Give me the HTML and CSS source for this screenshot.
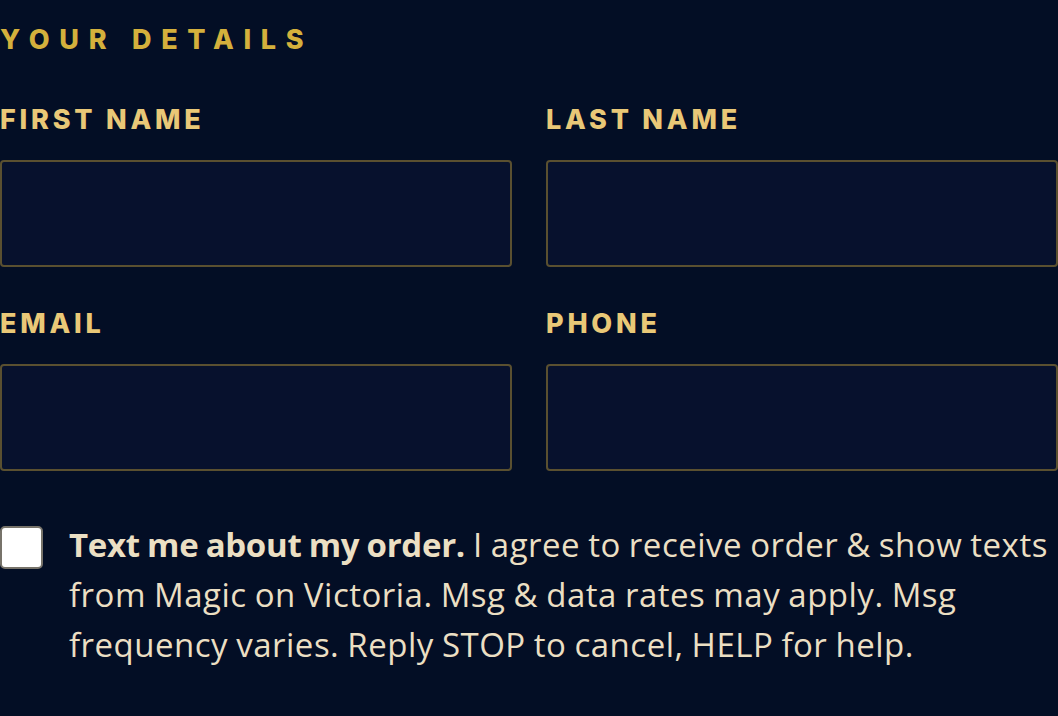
FILE: index.html
```html
<!DOCTYPE html>
<html>
<head>
<meta charset="utf-8">
<link rel="stylesheet" href="styles.css">
</head>
<body>
<section class="details">
  <h2 class="heading">YOUR DETAILS</h2>
  <div class="fields">
    <div class="field">
      <label class="label">FIRST NAME</label>
      <div class="input"></div>
    </div>
    <div class="field">
      <label class="label">LAST NAME</label>
      <div class="input"></div>
    </div>
    <div class="field">
      <label class="label">EMAIL</label>
      <div class="input"></div>
    </div>
    <div class="field">
      <label class="label">PHONE</label>
      <div class="input"></div>
    </div>
  </div>
  <div class="consent">
    <span class="checkbox"></span>
    <p class="consent-text"><strong>Text me about my order.</strong> I agree to receive order &amp; show texts from Magic on Victoria. Msg &amp; data rates may apply. Msg frequency varies. Reply STOP to cancel, HELP for help.</p>
  </div>
</section>
</body>
</html>
```

FILE: styles.css
```css
html, body {
  margin: 0;
  padding: 0;
  background: #030e25;
}
body {
  font-family: "Inter", "Liberation Sans", sans-serif;
  width: 1058px;
  height: 716px;
  overflow: hidden;
}
.details {
  padding-top: 26px;
}
.heading {
  margin: 0;
  font-size: 27px;
  line-height: 28px;
  font-weight: 800;
  letter-spacing: 0.36em;
  color: #d4b03c;
}
.fields {
  margin-top: 52px;
  display: grid;
  grid-template-columns: 512px 512px;
  column-gap: 34px;
  row-gap: 43px;
}
.field {
  display: flex;
  flex-direction: column;
}
.label {
  font-size: 27px;
  line-height: 28px;
  font-weight: 800;
  letter-spacing: 0.14em;
  color: #e9c877;
  margin-bottom: 26px;
}
.input {
  height: 103px;
  border: 2px solid #5a5030;
  border-radius: 4px;
  background: #07112d;
}
.consent {
  margin-top: 55px;
  display: flex;
  gap: 26px;
  align-items: flex-start;
}
.checkbox {
  flex: none;
  width: 39px;
  height: 39px;
  margin-top: 0;
  background: #fff;
  border: 2px solid #77736a;
  border-radius: 5px;
}
.consent-text {
  margin: 0;
  font-family: "Open Sans", "Liberation Sans", sans-serif;
  font-size: 33px;
  line-height: 50px;
  letter-spacing: 0.5px;
  word-spacing: -1px;
  color: #ebdfc3;
  margin-top: -6px;
}
.consent-text strong {
  font-weight: 700;
  letter-spacing: -0.3px;
}
```
